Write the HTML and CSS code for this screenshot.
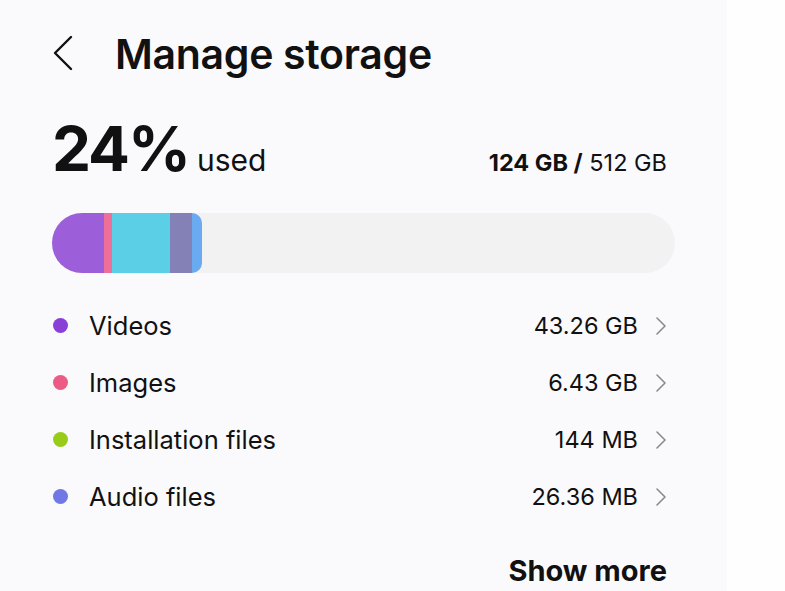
FILE: index.html
```html
<!DOCTYPE html>
<html lang="en">
<head>
<meta charset="utf-8">
<title>Manage storage</title>
<link rel="stylesheet" href="styles.css">
</head>
<body>
<div class="panel">
  <header class="header">
    <svg class="back" width="22" height="36" viewBox="0 0 22 36"><path d="M19 2 L3 18 L19 34" fill="none" stroke="#111" stroke-width="2.4" stroke-linecap="round" stroke-linejoin="round"/></svg>
    <h1 class="title">Manage storage</h1>
  </header>
  <section class="summary">
    <div class="used"><span class="pct">24%</span><span class="used-label">used</span></div>
    <div class="capacity"><b>124 GB /</b> 512 GB</div>
  </section>
  <div class="bar">
    <div class="seg s-video" style="width:52px"></div>
    <div class="seg s-image" style="width:8px"></div>
    <div class="seg s-cyan" style="width:58px"></div>
    <div class="seg s-gray" style="width:22px"></div>
    <div class="seg s-blue" style="width:10px"></div>
  </div>
  <ul class="list">
    <li class="row"><span class="dot d-video"></span><span class="label">Videos</span><span class="value">43.26 GB</span><svg class="chev" width="12" height="20" viewBox="0 0 12 20"><path d="M2 2 L10 10 L2 18" fill="none" stroke="#8a8a8a" stroke-width="1.6" stroke-linecap="round" stroke-linejoin="round"/></svg></li>
    <li class="row"><span class="dot d-image"></span><span class="label">Images</span><span class="value">6.43 GB</span><svg class="chev" width="12" height="20" viewBox="0 0 12 20"><path d="M2 2 L10 10 L2 18" fill="none" stroke="#8a8a8a" stroke-width="1.6" stroke-linecap="round" stroke-linejoin="round"/></svg></li>
    <li class="row"><span class="dot d-install"></span><span class="label">Installation files</span><span class="value">144 MB</span><svg class="chev" width="12" height="20" viewBox="0 0 12 20"><path d="M2 2 L10 10 L2 18" fill="none" stroke="#8a8a8a" stroke-width="1.6" stroke-linecap="round" stroke-linejoin="round"/></svg></li>
    <li class="row"><span class="dot d-audio"></span><span class="label">Audio files</span><span class="value">26.36 MB</span><svg class="chev" width="12" height="20" viewBox="0 0 12 20"><path d="M2 2 L10 10 L2 18" fill="none" stroke="#8a8a8a" stroke-width="1.6" stroke-linecap="round" stroke-linejoin="round"/></svg></li>
  </ul>
  <div class="more"><span class="more-btn">Show more</span></div>
</div>
<div class="side"></div>
</body>
</html>
```

FILE: styles.css
```css
html, body {
  margin: 0;
  padding: 0;
  height: 100%;
}
body {
  display: flex;
  font-family: Inter, "Noto Sans", sans-serif;
  color: #111;
  background: #fefefe;
  overflow: hidden;
}
.panel {
  width: 727px;
  box-sizing: border-box;
  padding: 0 62px 0 52px;
  background: #fafafd;
  height: 591px;
}
.side {
  flex: 1;
  background: #fefefe;
}
.header {
  display: flex;
  align-items: center;
  height: 108px;
}
.back {
  margin-top: -2px;
  flex: none;
}
.title {
  margin: 0 0 0 41px;
  font-size: 41px;
  font-weight: 600;
  letter-spacing: -0.3px;
  line-height: 1;
}
.summary {
  display: flex;
  justify-content: space-between;
  align-items: baseline;
  height: 72px;
  padding-top: 10px;
}
.used {
  display: flex;
  align-items: baseline;
}
.pct {
  font-size: 62px;
  font-weight: 700;
  letter-spacing: -2px;
  line-height: 1;
}
.used-label {
  font-size: 30px;
  margin-left: 8px;
}
.capacity {
  font-size: 23.5px;
  margin-right: -2px;
}
.capacity b {
  font-weight: 700;
}
.bar {
  margin-top: 23px;
  height: 60px;
  border-radius: 30px;
  background: #f2f2f2;
  display: flex;
  overflow: hidden;
  width: 623px;
}
.seg { height: 100%; }
.s-video { background: #9c5fd9; }
.s-image { background: #ee6f9a; }
.s-cyan { background: #5acfe6; }
.s-gray { background: #8381b5; }
.s-blue { background: #6aaaf0; border-radius: 0 30px 30px 0; }
.list {
  list-style: none;
  margin: 24px 0 0;
  padding: 0;
}
.row {
  display: flex;
  align-items: center;
  height: 57px;
  font-size: 24px;
}
.dot {
  width: 15px;
  height: 15px;
  border-radius: 50%;
  margin-left: 1px;
  flex: none;
}
.d-video { background: #8a3fd6; }
.d-image { background: #ec5a86; }
.d-install { background: #99cc1a; }
.d-audio { background: #6f78e5; }
.label {
  margin-left: 21px;
  flex: 1;
  font-size: 25.5px;
}
.value {
  margin-right: 17px;
  font-size: 23.5px;
}
.chev {
  flex: none;
  margin-right: -2px;
}
.more {
  display: flex;
  justify-content: flex-end;
  margin-top: 28px;
  margin-right: -2px;
}
.more-btn {
  font-size: 29px;
  font-weight: 700;
}
```
